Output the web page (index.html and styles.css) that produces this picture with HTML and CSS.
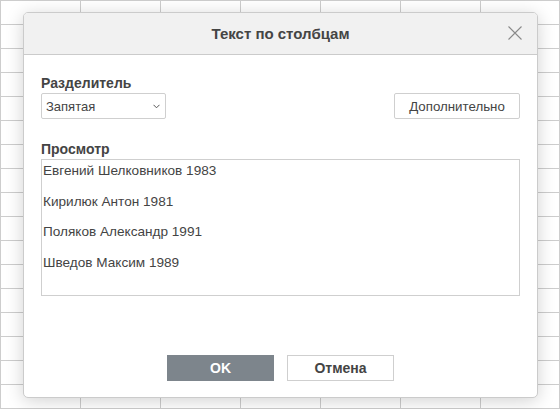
FILE: index.html
```html
<!DOCTYPE html>
<html lang="ru">
<head>
<meta charset="utf-8">
<title>Текст по столбцам</title>
<link rel="stylesheet" href="styles.css">
</head>
<body>
<div class="sheet">
  <div class="dialog">
    <div class="dialog-header">
      <span class="dialog-title">Текст по столбцам</span>
      <svg class="close" width="14" height="14" viewBox="0 0 14 14"><path d="M0.5 0.5 L13.5 13.5 M13.5 0.5 L0.5 13.5" stroke="#8a8a8a" stroke-width="1.1" fill="none"/></svg>
    </div>
    <div class="dialog-body">
      <div class="label">Разделитель</div>
      <div class="row">
        <div class="select">
          <span>Запятая</span>
          <svg class="chev" width="7" height="5" viewBox="0 0 7 5"><path d="M0.5 0.8 L3.5 3.8 L6.5 0.8" stroke="#555" stroke-width="1" fill="none"/></svg>
        </div>
        <div class="btn btn-wide">Дополнительно</div>
      </div>
      <div class="label label-preview">Просмотр</div>
      <div class="preview">
        <div class="prow">Евгений Шелковников 1983</div>
        <div class="prow">Кирилюк Антон 1981</div>
        <div class="prow">Поляков Александр 1991</div>
        <div class="prow">Шведов Максим 1989</div>
      </div>
      <div class="footer">
        <div class="fbtn fbtn-primary">OK</div>
        <div class="fbtn fbtn-default">Отмена</div>
      </div>
    </div>
  </div>
</div>
</body>
</html>
```

FILE: styles.css
```css
html, body {
  margin: 0;
  padding: 0;
}
body {
  font-family: "Liberation Sans", Arial, sans-serif;
  color: #444;
}
.sheet {
  position: relative;
  width: 560px;
  height: 409px;
  overflow: hidden;
  background-color: #fff;
  background-image:
    linear-gradient(to right, #cdcdcd 1px, transparent 1px),
    linear-gradient(to bottom, #cdcdcd 1px, transparent 1px);
  background-size: 80px 100%, 100% 24px;
  box-sizing: border-box;
  border-right: 1px solid #cdcdcd;
}
.dialog {
  position: absolute;
  left: 23px;
  top: 12px;
  width: 515px;
  height: 386px;
  box-sizing: border-box;
  border: 1px solid #cbcbcb;
  border-radius: 5px;
  background: #fff;
  box-shadow: 0 3px 18px rgba(0, 0, 0, 0.18);
  display: flex;
  flex-direction: column;
  overflow: hidden;
}
.dialog-header {
  position: relative;
  height: 41px;
  flex: none;
  background: #f1f1f1;
  border-bottom: 1px solid #cbcbcb;
  display: flex;
  align-items: center;
  justify-content: center;
}
.dialog-title {
  font-size: 15px;
  font-weight: bold;
  color: #444;
}
.close {
  position: absolute;
  right: 15px;
  top: 13px;
}
.dialog-body {
  flex: 1;
  display: flex;
  flex-direction: column;
  padding: 21px 17px 16px 17px;
}
.label {
  font-size: 14px;
  font-weight: bold;
  line-height: 15px;
  height: 15px;
  color: #444;
}
.row {
  margin-top: 2px;
  display: flex;
  justify-content: space-between;
  align-items: flex-start;
}
.select {
  width: 125px;
  height: 26px;
  box-sizing: border-box;
  border: 1px solid #cfcfcf;
  border-radius: 2px;
  display: flex;
  align-items: center;
  justify-content: space-between;
  padding: 0 5px 0 4px;
  font-size: 13px;
  color: #444;
}
.chev {
  margin-top: 1px;
}
.btn {
  height: 26px;
  box-sizing: border-box;
  border: 1px solid #cfcfcf;
  border-radius: 2px;
  display: flex;
  align-items: center;
  justify-content: center;
  font-size: 13.3px;
  color: #444;
  background: #fff;
}
.btn-wide {
  width: 126px;
}
.label-preview {
  margin-top: 23px;
}
.preview {
  margin-top: 2px;
  height: 137px;
  box-sizing: border-box;
  border: 1px solid #cfcfcf;
  padding: 1px 1px 0 1px;
}
.prow {
  height: 30.67px;
  line-height: 20px;
  font-size: 13.6px;
  color: #444;
}
.footer {
  margin-top: auto;
  display: flex;
  justify-content: center;
  gap: 13px;
}
.fbtn {
  width: 107px;
  height: 26px;
  box-sizing: border-box;
  display: flex;
  align-items: center;
  justify-content: center;
  font-size: 14px;
  font-weight: bold;
}
.fbtn-primary {
  background: #7d858c;
  color: #fff;
  border: 1px solid #7d858c;
}
.fbtn-default {
  background: #fff;
  color: #444;
  border: 1px solid #cfcfcf;
}
```
